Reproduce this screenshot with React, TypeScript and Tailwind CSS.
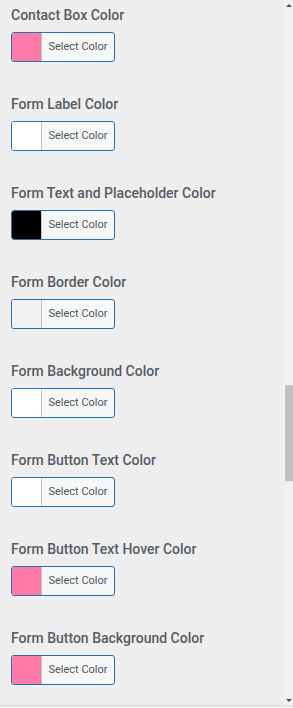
import React from "react";

const items = [
  { label: "Contact Box Color", color: "#fd7aa9" },
  { label: "Form Label Color", color: "#ffffff" },
  { label: "Form Text and Placeholder Color", color: "#000000" },
  { label: "Form Border Color", color: "#f1f1f1" },
  { label: "Form Background Color", color: "#ffffff" },
  { label: "Form Button Text Color", color: "#ffffff" },
  { label: "Form Button Text Hover Color", color: "#fd7aa9" },
  { label: "Form Button Background Color", color: "#fd7aa9" },
];

const ColorControl = ({ label, color }: { label: string; color: string }) => {
  return (
    <div className="flex flex-col">
      <span className="text-[14px] leading-[20px] font-medium text-[#555d66]">{label}</span>
      <button
        type="button"
        className="mt-[7px] flex h-[30px] w-[104px] overflow-hidden rounded-[3px] border border-[#2271b1] bg-[#f6f7f7]"
      >
        <span className="h-full w-[30px] border-r border-[#c3c4c7]" style={{ background: color }} />
        <span className="flex h-full flex-1 items-center justify-center text-[11px] text-[#50575e]">
          Select Color
        </span>
      </button>
    </div>
  );
};

export default function App() {
  return (
    <div className="flex h-[708px] w-[293px] flex-col bg-[#eeeeee] font-['Roboto',sans-serif]">
      <div className="flex h-[706px] border-b border-[#dcdcdc]">
        <div className="flex flex-1 flex-col gap-[32px] px-[11px] pt-[5px]">
          {items.map((item) => (
            <ColorControl key={item.label} label={item.label} color={item.color} />
          ))}
        </div>
        {/* scrollbar */}
        <div className="flex w-[10px] flex-col bg-[#f1f1f1]">
          <div className="flex h-[10px] items-center justify-end pr-[1px]">
            <span className="h-0 w-0 border-x-[3px] border-b-[3px] border-x-transparent border-b-[#505050]" />
          </div>
          <div className="h-[375px]" />
          <div className="ml-[2px] h-[96px] bg-[#c1c1c1]" />
          <div className="flex-1" />
          <div className="flex h-[10px] items-center justify-end pr-[1px]">
            <span className="h-0 w-0 border-x-[3px] border-t-[3px] border-x-transparent border-t-[#505050]" />
          </div>
        </div>
      </div>
    </div>
  );
}
